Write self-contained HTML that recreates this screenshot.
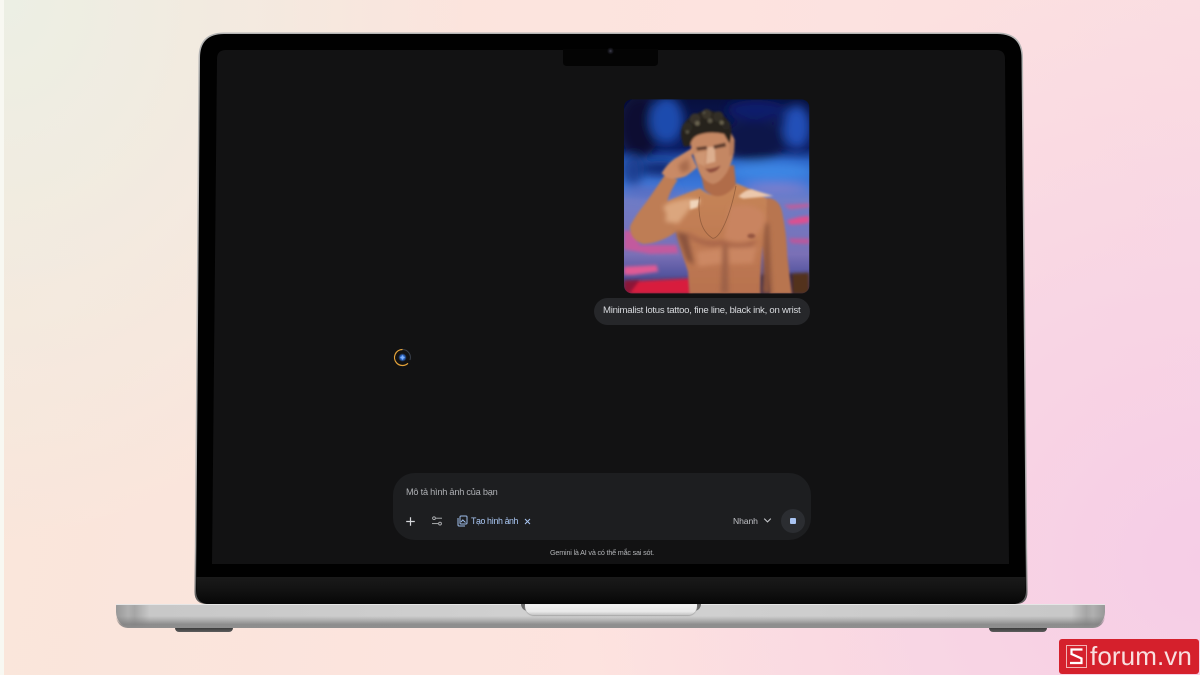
<!DOCTYPE html>
<html lang="vi"><head><meta charset="utf-8"><title>Gemini</title>
<style>
*{box-sizing:border-box;margin:0;padding:0}
html,body{width:1200px;height:675px;overflow:hidden;background:#fff}
body{position:relative;font-family:"Liberation Sans","Noto Sans CJK SC",sans-serif}
.a{position:absolute}
#bg{left:4px;top:0;width:1196px;height:675px;background:
 radial-gradient(ellipse 460px 540px at 0 0,#ecefe4 0,rgba(236,239,228,0) 100%),
 radial-gradient(ellipse 620px 600px at 1200px 560px,#f6cde6 0,rgba(246,205,230,0) 100%),
 linear-gradient(100deg,#f9e6da 0,#fde3df 55%,#fadde2 100%)}
#strip{left:0;top:0;width:4px;height:675px;background:#f8f8f2}
#base{left:116px;top:604px;width:989px;height:24px;border-radius:2px 2px 16px 16px;background:
 linear-gradient(90deg,#989898 0,#b0b0b0 1.2%,#a6a6a6 1.9%,#c8c8c8 3.4%,#d2d2d2 50%,#c8c8c8 96.6%,#a6a6a6 98.1%,#b0b0b0 98.8%,#989898 100%)}
#baseshade{left:116px;top:616px;width:989px;height:12px;border-radius:0 0 16px 16px;background:linear-gradient(180deg,rgba(120,120,120,0) 0,rgba(120,120,120,.35) 35%,rgba(125,125,125,.8) 70%,#8e8e8e 100%)}
#baseh{left:116px;top:604px;width:989px;height:1px;background:#e6e6e6}
#lipd{left:521px;top:604px;width:180px;height:7px;border-radius:0 0 8px 8px;background:#6a6a6a}
#lip{left:525px;top:604px;width:172px;height:11px;border-radius:0 0 9px 9px;background:linear-gradient(180deg,#f3f3f3,#e8e8e8 70%,#c4c4c4);box-shadow:0 1px 1px #a8a8a8}
.foot{top:628px;width:58px;height:4px;background:linear-gradient(180deg,#3b3b3b,#5d5d5d);border-radius:0 0 6px 6px}
#bubble{left:594px;top:298px;width:216px;height:27px;border-radius:14px;background:#26272a;color:#d8dade;font-size:9.6px;letter-spacing:-.26px;line-height:26px;padding-left:9px;white-space:nowrap}
#input{left:393px;top:473px;width:418px;height:67px;border-radius:22px;background:#1d1e20}
#ph{left:406px;top:486px;font-size:9.2px;letter-spacing:-.23px;line-height:12px;color:#aeb0b4;white-space:nowrap}
#tool{left:471px;top:515px;font-size:8.8px;letter-spacing:-.4px;line-height:12px;color:#a9c6f2;white-space:nowrap}
#nhanh{left:733px;top:515px;font-size:8.6px;letter-spacing:-.1px;line-height:12px;color:#bfc1c5;white-space:nowrap}
#stop{left:781px;top:509px;width:24px;height:24px;border-radius:50%;background:#2b2d31}
#stopi{left:790px;top:518px;width:6px;height:6px;border-radius:1px;background:#a9c4f2}
#foot{left:400px;top:548px;width:404px;text-align:center;font-size:7.2px;letter-spacing:-.18px;line-height:10px;color:#b3b5b8;white-space:nowrap}
#logo{left:1059px;top:639px;width:140px;height:35px;border-radius:3px;background:#d5202c;color:#f9dfdf;font-size:26px;letter-spacing:.1px;line-height:34px;padding-left:31px;white-space:nowrap}
</style></head><body>
<div class="a" id="bg"></div><div class="a" id="strip"></div>

<div class="a" id="base"></div><div class="a" id="baseshade"></div><div class="a" id="baseh"></div>
<div class="a foot" style="left:175px"></div><div class="a foot" style="left:989px"></div>

<svg class="a" style="left:0;top:0" width="1200" height="675" viewBox="0 0 1200 675">
<defs>
<linearGradient id="ch" x1="0" y1="0" x2="0" y2="1"><stop offset="0" stop-color="#1a1a1a"/><stop offset=".5" stop-color="#121212"/><stop offset="1" stop-color="#070707"/></linearGradient>
<radialGradient id="cm"><stop offset="0" stop-color="#40404e"/><stop offset=".5" stop-color="#1a1a22"/><stop offset="1" stop-color="#050505"/></radialGradient>
<linearGradient id="ed" x1="0" y1="0" x2="0" y2="1"><stop offset="0" stop-color="#b4b4b4"/><stop offset=".9" stop-color="#a8a8a8"/><stop offset="1" stop-color="#555"/></linearGradient>
</defs>
<path d="M198.500 58Q198.500 32.500 224 32.500H997Q1023 32.500 1023 58L1027.500 592Q1027.500 604 1016 604H207Q194.500 604 194.500 592Z" fill="url(#ed)"/>
<path d="M200 58Q200 34 224 34H997Q1021.500 34 1021.500 58L1026 590Q1026 604 1012 604H209Q196 604 196 590Z" fill="#010101"/>
<path d="M196.500 577H1025.500V590Q1025.500 604 1012 604H209Q196.500 604 196.500 590Z" fill="url(#ch)"/>
<path d="M226 50H996Q1005 50 1005 59L1009 564H212L217 59Q217 50 226 50Z" fill="#121213"/>
<path d="M563 49H658V62Q658 66 654 66H567Q563 66 563 62Z" fill="#040404"/>
<circle cx="610.500" cy="51" r="3.500" fill="url(#cm)"/>
</svg>

<svg class="a" style="left:610px;top:90px" width="210" height="240" viewBox="0 0 630 720">
<defs>
<clipPath id="c"><rect x="42" y="28" width="556" height="582" rx="24"/></clipPath>
<linearGradient id="sky" x1="0" y1="0" x2="0" y2="1">
<stop offset="0" stop-color="#08103e"/><stop offset=".25" stop-color="#0c1c62"/><stop offset=".32" stop-color="#2a62c4"/><stop offset=".44" stop-color="#3a76d8"/><stop offset=".52" stop-color="#6f7cc6"/><stop offset=".8" stop-color="#7a70b6"/><stop offset=".9" stop-color="#5656a0"/><stop offset="1" stop-color="#3a2c50"/>
</linearGradient>
<linearGradient id="skin" x1="0" y1="0" x2="0" y2="1"><stop offset="0" stop-color="#c68658"/><stop offset=".55" stop-color="#bf7a52"/><stop offset="1" stop-color="#b87250"/></linearGradient>
<filter id="b" x="-10%" y="-10%" width="120%" height="120%"><feGaussianBlur stdDeviation="4.500"/></filter>
<filter id="b1" x="-20%" y="-20%" width="140%" height="140%"><feGaussianBlur stdDeviation="3"/></filter>
<filter id="b3" x="-20%" y="-20%" width="140%" height="140%"><feGaussianBlur stdDeviation="7"/></filter>
<filter id="b2" x="-30%" y="-30%" width="160%" height="160%"><feGaussianBlur stdDeviation="15"/></filter>
</defs>
<g clip-path="url(#c)">
<rect x="42" y="28" width="556" height="582" fill="url(#sky)"/>
<g filter="url(#b2)">
<ellipse cx="90" cy="110" rx="60" ry="90" fill="#070d33"/>
<ellipse cx="170" cy="90" rx="50" ry="70" fill="#1f4cae"/>
<ellipse cx="70" cy="240" rx="32" ry="45" fill="#1c3f92"/>
<ellipse cx="150" cy="235" rx="60" ry="22" fill="#10256e"/>
<ellipse cx="430" cy="150" rx="100" ry="60" fill="#091548"/>
<ellipse cx="560" cy="110" rx="40" ry="65" fill="#2350b8"/>
<ellipse cx="440" cy="60" rx="90" ry="30" fill="#0e1f6c"/>
<ellipse cx="480" cy="245" rx="130" ry="28" fill="#3c86e4"/>
<ellipse cx="120" cy="305" rx="80" ry="14" fill="#5a6cc0"/>
<ellipse cx="500" cy="295" rx="100" ry="12" fill="#8f80c8"/>
</g>
<g filter="url(#b)">
<path d="M530 392Q570 378 598 378V398Q570 404 540 404Z" fill="#dc4f90"/>
<path d="M520 345 598 340V352L540 358Z" fill="#b8619e"/>
<path d="M535 445 598 445V462L545 460Z" fill="#b8589c"/>
<path d="M42 420 70 425 90 465 200 465 205 490 120 492 42 478Z" fill="#c25a9e"/>
<path d="M42 530 140 525 145 545 70 555 42 555Z" fill="#e05a94"/>
<path d="M42 575 240 565 245 612H42Z" fill="#d81e3c"/>
<path d="M42 572 90 570 60 610H42Z" fill="#8c1438"/>
<path d="M450 555 598 548V612H450Z" fill="#1a1e50"/>
<path d="M545 550 598 548V612H545Z" fill="#52301f"/>
</g>
<g filter="url(#b1)">
<path d="M440 330Q500 310 515 360Q530 430 532 500L546 612H480L462 500Q450 400 440 330Z" fill="#b87450"/>
<path d="M270 295Q330 345 380 280Q430 300 470 325Q470 400 462 440Q450 520 452 612H238L234 545Q210 470 198 425L150 345Q210 315 270 295Z" fill="url(#skin)"/>
<path d="M165 255L203 270Q175 310 170 345Q185 395 200 425Q150 460 100 462Q60 450 60 410Q70 385 110 335Z" fill="#be7d54"/>
<path d="M270 235 372 225 378 285Q330 345 282 298Z" fill="#b06c48"/>
<path d="M155 250Q175 215 205 200L262 165Q278 168 270 182L245 195Q252 215 262 232L228 258Q195 272 170 262Z" fill="#c98a66"/>
</g>
<g filter="url(#b3)">
<path d="M205 225 235 205 240 240 215 250Z" fill="#a86c4e"/>
<path d="M158 352Q175 332 240 325Q270 325 272 338L240 355 205 400 165 395Q175 370 158 352Z" fill="#dba67e"/>
<path d="M360 350Q430 335 462 370Q470 420 420 450Q380 462 342 445Z" fill="#c98460"/>
<path d="M340 450Q380 472 440 450L428 470Q380 478 340 465Q290 478 240 445L232 425Q280 462 340 450Z" fill="#a8654a"/>
<path d="M260 485 335 475 335 520 265 530Z" fill="#cc8864"/>
<path d="M355 475 440 470 430 520 358 522Z" fill="#ca8662"/>
<path d="M339 465 352 465 356 610 332 610Z" fill="#9c6046"/>
<path d="M198 425 232 432 252 525 230 510Z" fill="#8a533c"/>
<path d="M466 400 476 400 486 612H454Z" fill="#8f573e"/>
</g>
<g filter="url(#b1)">
<path d="M240 332 270 328 262 352 240 358Z" fill="#f0d4ba"/>
<path d="M385 320Q405 298 425 298L490 318Q440 322 400 326Z" fill="#ecc8ac"/>
<ellipse cx="424" cy="438" rx="12" ry="7" fill="#945440"/>
<!-- head, tilted -->
<path d="M240 110Q300 90 350 105L372 145Q378 195 352 245Q330 280 308 282Q280 275 265 240Q245 190 240 150Z" fill="#c48763"/>
<path d="M292 172 314 170 316 215 288 222Z" fill="#dcae8e"/>
<path d="M252 190 288 184 284 228 264 220Z" fill="#ce9672"/>
<path d="M284 236Q305 238 332 226Q322 248 298 248Z" fill="#8f4d3c"/>
<path d="M258 172 290 168 292 178 262 182Z" fill="#5e3e2e"/>
<path d="M310 166 346 158 348 170 312 177Z" fill="#5e3e2e"/>
<path d="M358 155 374 148 372 190 358 200Z" fill="#b57a5a"/>
<!-- hair -->
<path d="M222 170Q208 135 216 112Q230 82 262 70Q290 55 322 68Q352 80 362 108Q368 135 358 160L342 132Q300 122 262 136Q244 144 240 168Z" fill="#26241d"/>
<circle cx="232" cy="112" r="15" fill="#2e2b23"/><circle cx="255" cy="86" r="16" fill="#37332a"/><circle cx="290" cy="72" r="15" fill="#3a362c"/><circle cx="325" cy="80" r="16" fill="#332f27"/><circle cx="348" cy="105" r="13" fill="#2a2821"/>
<circle cx="262" cy="100" r="7" fill="#6a6350"/><circle cx="300" cy="92" r="7" fill="#5d5746"/><circle cx="335" cy="98" r="6" fill="#6a6350"/><circle cx="232" cy="126" r="5" fill="#5a5444"/><circle cx="282" cy="68" r="4" fill="#5a5444"/>
</g>
<path d="M268 320C264 370 268 420 308 445 330 445 360 380 378 288" fill="none" stroke="#7e4f33" stroke-width="2.500" opacity=".65"/>
</g>
</svg>

<div class="a" id="bubble">Minimalist lotus tattoo, fine line, black ink, on wrist</div>

<svg class="a" style="left:392px;top:347px" width="21" height="21" viewBox="0 0 21 21">
<defs><radialGradient id="gl"><stop offset="0" stop-color="#5a9af5"/><stop offset=".5" stop-color="#2f6cd0"/><stop offset="1" stop-color="#2f6cd0" stop-opacity="0"/></radialGradient></defs>
<path d="M10.500 2.500A8 8 0 0 1 18 13" fill="none" stroke="#39404c" stroke-width="1"/>
<path d="M10.500 2.500A8 8 0 0 0 4.500 15.800 8 8 0 0 0 16 16.300" fill="none" stroke="#e5a33a" stroke-width="1.200"/>
<circle cx="10.500" cy="10.500" r="4.200" fill="url(#gl)"/>
<path d="M10.500 7.500C10.800 9.300 11.600 10.100 13.500 10.500 11.600 10.900 10.800 11.700 10.500 13.500 10.200 11.700 9.400 10.900 7.500 10.500 9.400 10.100 10.200 9.300 10.500 7.500Z" fill="#7fb0fa"/>
</svg>

<div class="a" id="input"></div>
<div class="a" id="ph">Mô tả hình ảnh của bạn</div>
<svg class="a" style="left:404px;top:515px" width="13" height="13" viewBox="0 0 13 13"><path d="M6.500 2.200V10.800M2.200 6.500H10.800" stroke="#d5d7da" stroke-width="1.200"/></svg>
<svg class="a" style="left:431px;top:515px" width="12" height="12" viewBox="0 0 12 12" fill="none" stroke="#b5b7ba" stroke-width=".9"><circle cx="3" cy="3.200" r="1.400"/><path d="M5 3.200H11"/><circle cx="9" cy="8.600" r="1.400"/><path d="M1 8.600H7"/></svg>
<svg class="a" style="left:457px;top:515px" width="11" height="12" viewBox="0 0 11 12" fill="none" stroke="#9fbdea" stroke-width="1"><rect x="3" y="1" width="7" height="8" rx="1"/><path d="M1 3V10A1 1 0 0 0 2 11H8"/><path d="M4 7L5.800 5 8.500 7.500"/></svg>
<div class="a" id="tool">Tạo hình ảnh</div>
<svg class="a" style="left:524px;top:518px" width="7" height="7" viewBox="0 0 7 7"><path d="M1 1L6 6M6 1L1 6" stroke="#a9c6f2" stroke-width="1"/></svg>
<div class="a" id="nhanh">Nhanh</div>
<svg class="a" style="left:763px;top:517px" width="9" height="7" viewBox="0 0 9 7"><path d="M1.200 1.600L4.500 4.900 7.800 1.600" fill="none" stroke="#c5c7ca" stroke-width="1.100"/></svg>
<div class="a" id="stop"></div><div class="a" id="stopi"></div>
<div class="a" id="foot">Gemini là AI và có thể mắc sai sót.</div>

<div class="a" id="lipd"></div><div class="a" id="lip"></div>

<div class="a" id="logo">forum.vn</div>
<svg class="a" style="left:1066px;top:645px" width="21" height="23" viewBox="0 0 21 23">
<rect x=".5" y=".5" width="20" height="22" fill="none" stroke="#f2b3b5"/>
<path d="M16.500 4.500H5.500V9L15.500 13.500V18H4" fill="none" stroke="#fff" stroke-width="2.200"/>
</svg>
</body></html>
